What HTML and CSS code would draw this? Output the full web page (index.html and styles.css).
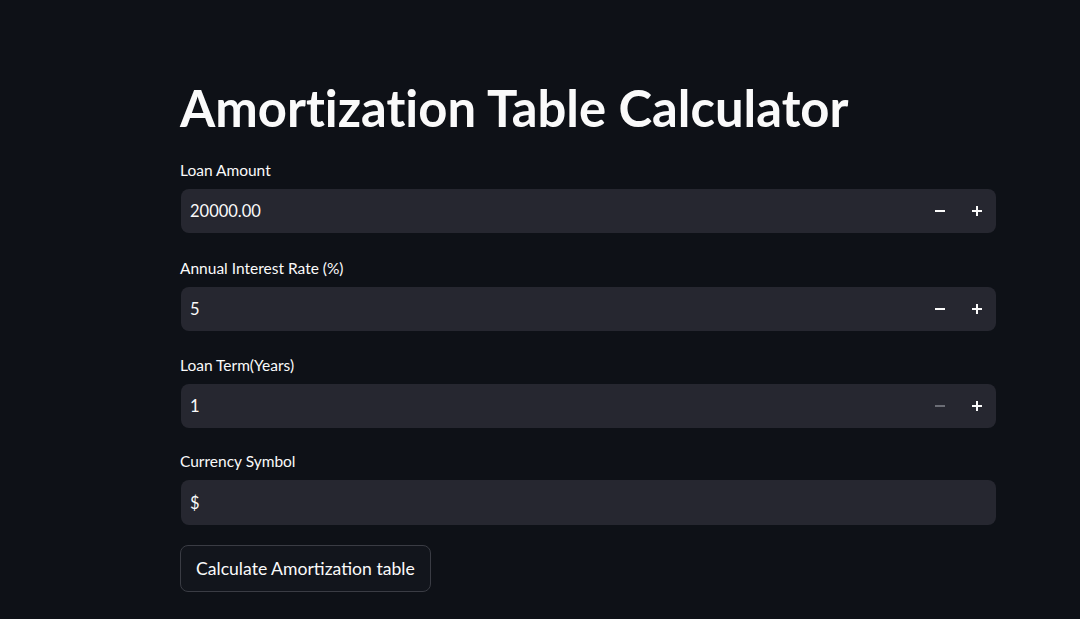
FILE: index.html
```html
<!DOCTYPE html>
<html>
<head>
<meta charset="utf-8">
<link rel="stylesheet" href="styles.css">
</head>
<body>
<main class="main">
  <h1 class="title">Amortization Table Calculator</h1>

  <div class="field">
    <label class="label">Loan Amount</label>
    <div class="input">
      <span class="value">20000.00</span>
      <div class="steps">
        <span class="step"><svg viewBox="0 0 12 12" width="12" height="12"><rect x="1" y="5" width="10" height="2" fill="currentColor"/></svg></span>
        <span class="step"><svg viewBox="0 0 12 12" width="12" height="12"><rect x="1" y="5" width="10" height="2" fill="currentColor"/><rect x="5" y="1" width="2" height="10" fill="currentColor"/></svg></span>
      </div>
    </div>
  </div>

  <div class="field">
    <label class="label">Annual Interest Rate (%)</label>
    <div class="input">
      <span class="value">5</span>
      <div class="steps">
        <span class="step"><svg viewBox="0 0 12 12" width="12" height="12"><rect x="1" y="5" width="10" height="2" fill="currentColor"/></svg></span>
        <span class="step"><svg viewBox="0 0 12 12" width="12" height="12"><rect x="1" y="5" width="10" height="2" fill="currentColor"/><rect x="5" y="1" width="2" height="10" fill="currentColor"/></svg></span>
      </div>
    </div>
  </div>

  <div class="field">
    <label class="label">Loan Term(Years)</label>
    <div class="input">
      <span class="value">1</span>
      <div class="steps">
        <span class="step disabled"><svg viewBox="0 0 12 12" width="12" height="12"><rect x="1" y="5" width="10" height="2" fill="currentColor"/></svg></span>
        <span class="step"><svg viewBox="0 0 12 12" width="12" height="12"><rect x="1" y="5" width="10" height="2" fill="currentColor"/><rect x="5" y="1" width="2" height="10" fill="currentColor"/></svg></span>
      </div>
    </div>
  </div>

  <div class="field">
    <label class="label">Currency Symbol</label>
    <div class="input text">
      <span class="value">$</span>
    </div>
  </div>

  <button class="btn">Calculate Amortization table</button>
</main>
</body>
</html>
```

FILE: styles.css
```css
html, body {
  margin: 0;
  padding: 0;
  background: #0e1117;
  color: #fafafa;
  font-family: "Lato", "Liberation Sans", sans-serif;
  font-variant-ligatures: none;
}
.main {
  width: 816px;
  margin-left: 180px;
  padding-top: 78px;
  display: flex;
  flex-direction: column;
}
.title {
  margin: 0 0 22px 0;
  font-size: 50.8px;
  font-weight: 700;
  line-height: 60px;
}
.field {
  display: flex;
  flex-direction: column;
  margin-bottom: 24px;
}
.field:nth-child(3) { margin-top: 1px; }
.field:nth-child(5) { margin-top: -1px; }
.label {
  font-size: 15.5px;
  line-height: 20px;
  height: 20px;
  margin-bottom: 9px;
}
.input {
  height: 44px;
  background: #262730;
  border-radius: 8px;
  display: flex;
  align-items: center;
  margin-left: 1px;
}
.input.text { height: 45px; }
.value {
  flex: 1;
  padding-left: 9px;
  font-size: 16.5px;
}
.steps {
  display: flex;
  height: 100%;
}
.step {
  width: 37px;
  display: flex;
  align-items: center;
  justify-content: center;
  color: #fafafa;
}
.step.disabled { color: #6b6d75; }
.steps .step:last-child { margin-right: 1px; }
.btn {
  align-self: flex-start;
  margin-top: -4px;
  height: 47px;
  padding: 0 15px;
  background: #12151c;
  border: 1px solid #3a3c44;
  border-radius: 8px;
  color: #fafafa;
  font-family: inherit;
  font-size: 17.6px;
}
```
